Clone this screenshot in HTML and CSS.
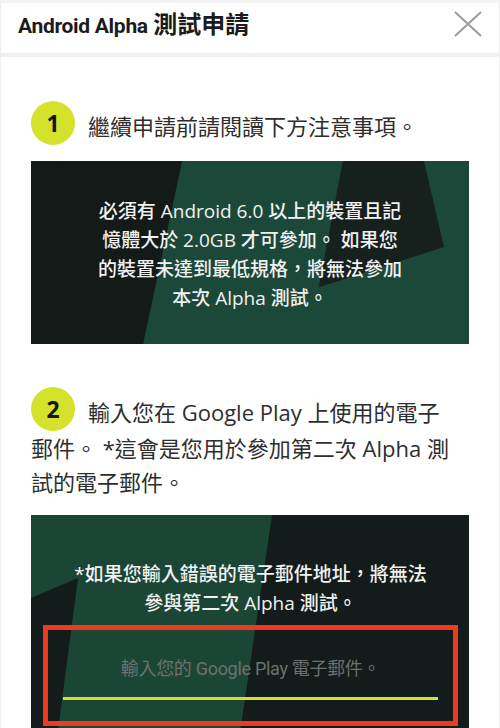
FILE: index.html
```html
<!DOCTYPE html>
<html lang="zh-Hant">
<head>
<meta charset="utf-8">
<title>Android Alpha 測試申請</title>
<link rel="stylesheet" href="styles.css">
</head>
<body>
<div class="modal">
  <header class="head">
    <h1 class="title"><span class="title-en">Android Alpha</span> 測試申請</h1>
    <button class="close" aria-label="關閉">
      <svg width="28" height="26" viewBox="0 0 28 26"><path d="M1 1 L27 25 M27 1 L1 25" stroke="#9b9b9b" stroke-width="2" fill="none"/></svg>
    </button>
  </header>
  <main class="content">
    <p class="step"><span class="num">1</span>繼續申請前請閱讀下方注意事項。</p>
    <section class="panel panel-a">
      <p class="note">必須有 Android 6.0 以上的裝置且記<br>憶體大於 2.0GB 才可參加。 如果您<br>的裝置未達到最低規格，將無法參加<br>本次 Alpha 測試。</p>
    </section>
    <p class="step step-two"><span class="num">2</span>輸入您在 Google Play 上使用的電子<br>郵件。 *這會是您用於參加第二次 Alpha 測<br>試的電子郵件。</p>
    <section class="panel panel-b">
      <p class="note">*如果您輸入錯誤的電子郵件地址，將無法<br>參與第二次 Alpha 測試。</p>
      <div class="field-wrap">
        <input class="field" type="email" placeholder="輸入您的 Google Play 電子郵件。">
      </div>
    </section>
  </main>
</div>
</body>
</html>
```
FILE: styles.css
```css
html, body {
  margin: 0;
  padding: 0;
  background: #ffffff;
}
body {
  font-family: "Open Sans", "Noto Sans CJK TC", sans-serif;
  overflow: hidden;
}
.modal {
  border-top: 3px solid #f3f3f3;
  border-left: 1px solid #f0f0f0;
  border-right: 1px solid #f0f0f0;
  min-height: 900px;
}
.head {
  height: 42px;
  padding: 0 17px 8px 17px;
  display: flex;
  align-items: center;
  justify-content: space-between;
  border-bottom: 4px solid #f0f0f0;
}
.title {
  margin: 0;
  font-family: "Noto Sans CJK TC", sans-serif;
  font-weight: 700;
  font-size: 24px;
  line-height: 30px;
  color: #1b1b1b;
}
.title-en {
  font-family: "Roboto", "Noto Sans CJK TC", sans-serif;
  font-weight: 700;
  font-size: 21px;
  letter-spacing: -0.3px;
}
.close {
  border: 0;
  background: none;
  padding: 0;
  width: 28px;
  height: 26px;
  display: flex;
}
.content {
  padding: 44px 30px 0 30px;
}
.step {
  margin: 0;
  font-size: 22px;
  line-height: 34px;
  color: #2e2e2e;
}
.num {
  display: inline-flex;
  width: 44px;
  height: 44px;
  border-radius: 50%;
  background: #d5e22b;
  align-items: center;
  justify-content: center;
  vertical-align: 3px;
  margin-right: 13px;
  font-weight: 700;
  font-size: 23px;
  color: #161616;
}
.step-two {
  margin-top: 43px;
}
.panel {
  position: relative;
  margin-top: 16px;
  overflow: hidden;
}
.panel::before,
.panel::after {
  content: "";
  position: absolute;
  inset: 0;
}
.panel-a {
  background: #1c4839;
  padding: 36px 0 31px;
}
.panel-a::before {
  background: #131a17;
  clip-path: polygon(0 0, 34.5% 0, 25.6% 100%, 0 100%);
}
.panel-a::after {
  background: #16201d;
  clip-path: polygon(71.2% 0, 89.7% 0, 94.3% 47%, 65.7% 69%);
}
.panel-b {
  background: #131c1a;
  padding: 45px 11px 20px 12px;
}
.panel-b::before {
  background: #1b4636;
  clip-path: polygon(0 0, 241px 0, 207px 100%, 25px 100%, 47px 63px, 0 83px);
}
.panel-b::after {
  display: none;
}
.note {
  position: relative;
  z-index: 1;
  margin: 0;
  text-align: center;
  font-size: 19px;
  line-height: 29px;
  font-weight: 500;
  color: #f1f1f1;
}
.field-wrap {
  position: relative;
  z-index: 1;
  margin-top: 7px;
  border: 5px solid #ee3a1f;
  padding: 22px 15px 21px;
}
.field {
  display: block;
  width: 100%;
  box-sizing: border-box;
  height: 48px;
  margin: 0;
  padding: 0 0 13px;
  border: 0;
  border-bottom: 3px solid #d3e02a;
  background: transparent;
  outline: none;
  text-align: center;
  font-family: "Roboto", "Noto Sans CJK TC", sans-serif;
  font-size: 18px;
  letter-spacing: -0.3px;
  line-height: 32px;
  color: #e0e0e0;
}
.field::placeholder {
  color: #6b716e;
}
```
